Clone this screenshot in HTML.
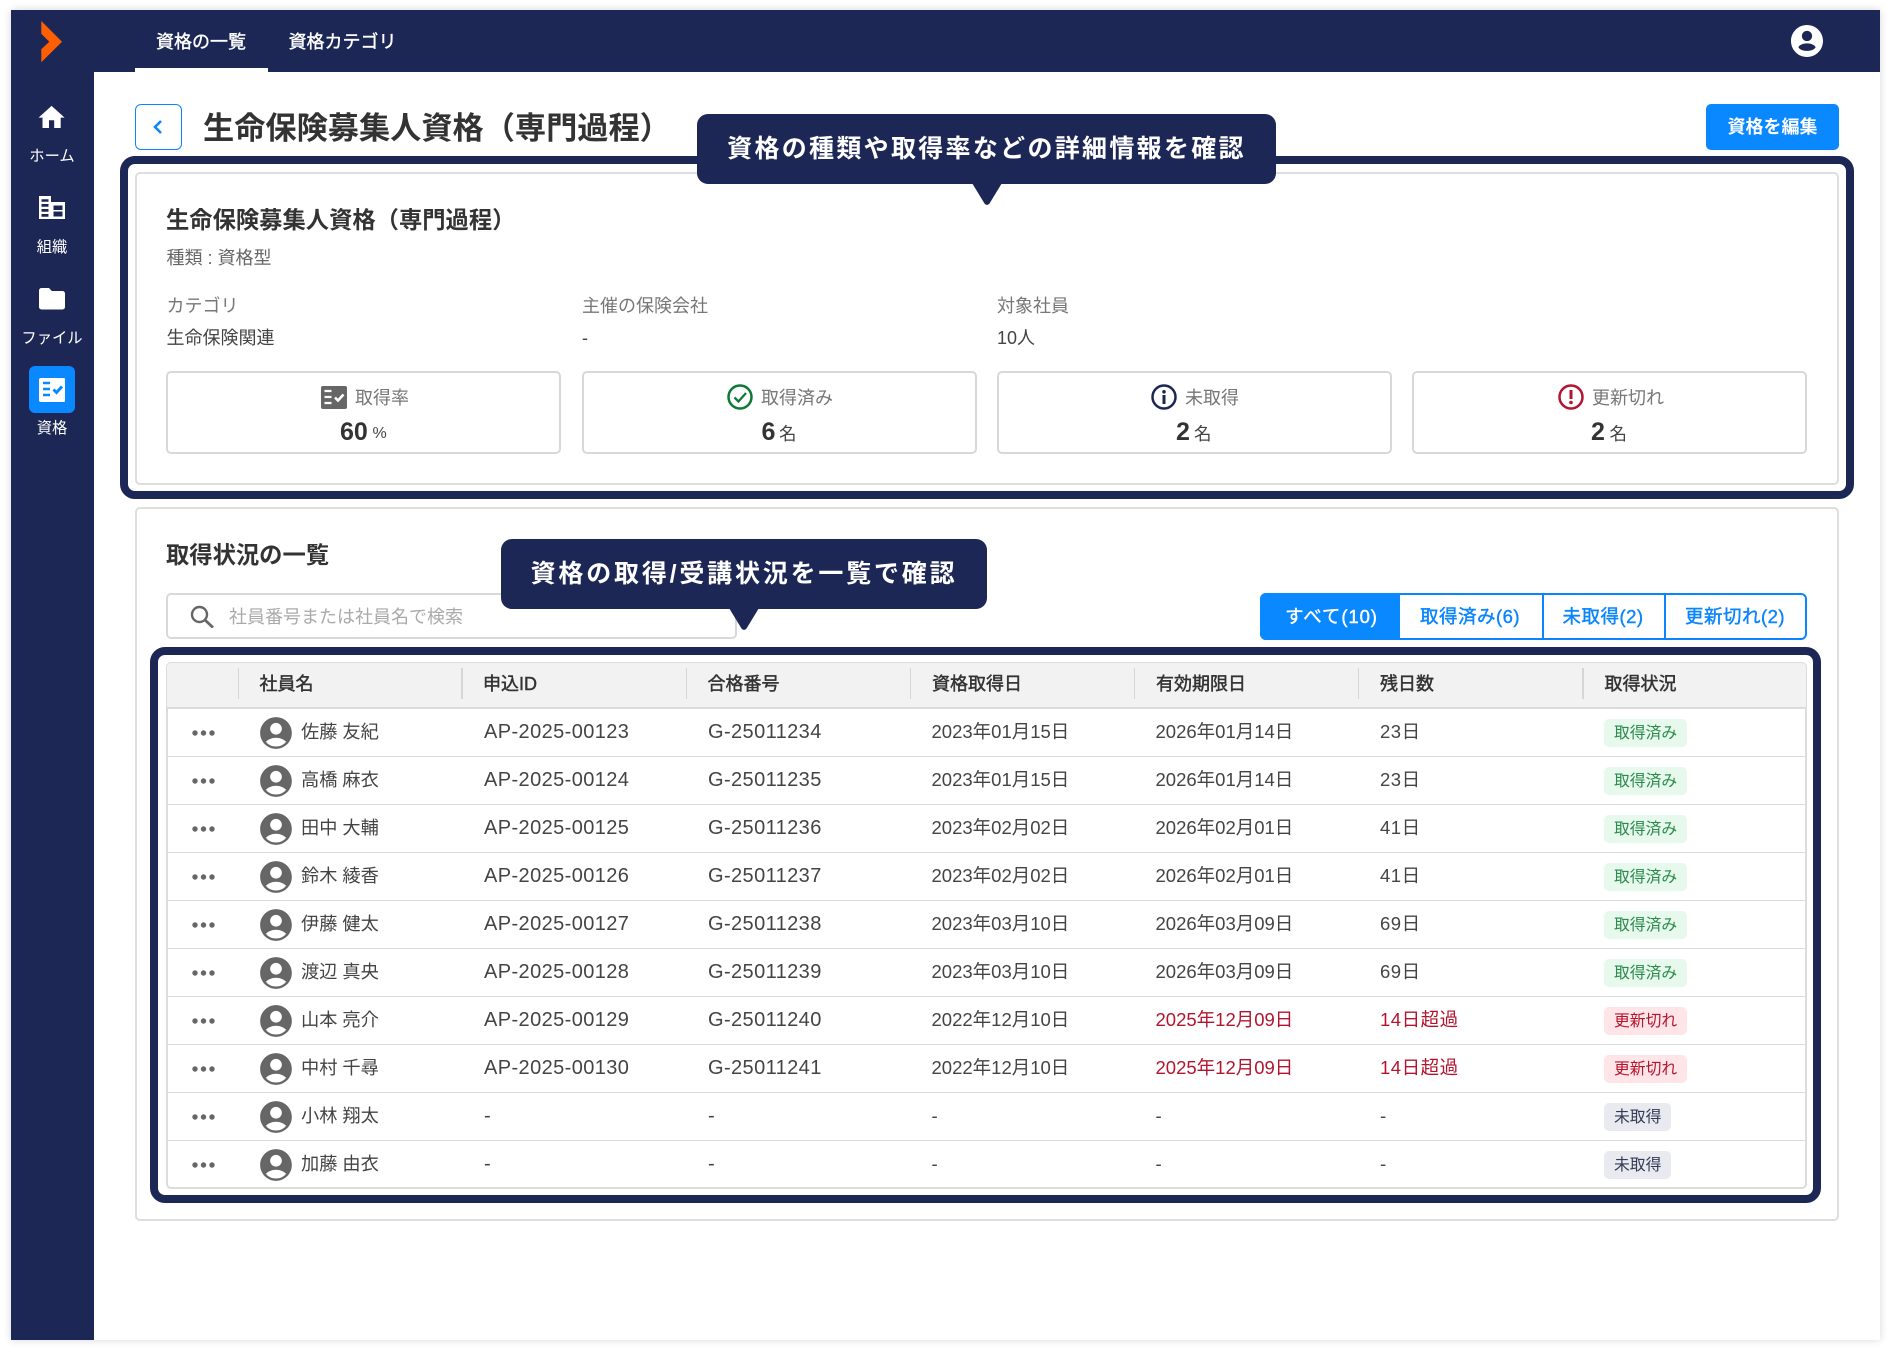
<!DOCTYPE html>
<html lang="ja"><head><meta charset="utf-8"><title>資格</title>
<style>
*{box-sizing:border-box;margin:0;padding:0}
html,body{width:1890px;height:1350px;background:#fff;overflow:hidden}
body{position:relative;font-family:"Liberation Sans","Noto Sans CJK JP",sans-serif;color:#333;font-size:18px}
.a{position:absolute;white-space:nowrap}
.win{left:11px;top:10px;width:1869px;height:1330px;background:#fff;box-shadow:0 0 8px rgba(0,0,0,.16)}
.side{left:11px;top:10px;width:82.5px;height:1330px;background:#1c2755}
.head{left:11px;top:10px;width:1869px;height:62px;background:#1c2755}
.tab{color:#fff;font-size:18px;-webkit-text-stroke:.4px #fff;line-height:26px;top:29px}
.nl{color:#fff;font-size:15.3px;line-height:20px;left:10px;width:84px;text-align:center}
.card{border:2px solid #dedede;border-radius:5px;background:#fff}
.frame{border:8px solid #1c2755;border-radius:15px}
.call{background:#1c2755;border-radius:11px;color:#fff;font-size:25px;font-weight:700;letter-spacing:2.3px;text-align:center}
.g{color:#777}
.box{border:2px solid #d8d8d8;border-radius:5px;top:371px;height:83px;width:394px;background:#fff}
.lb{color:#777;line-height:26px;top:385px}
.num{font-weight:700;font-size:25px;line-height:30px;top:417px;color:#333}
.un{font-size:17.5px;line-height:24px;top:422px;color:#444}
.r{position:absolute;left:166px;width:1640.5px;height:48px;border-bottom:1.5px solid #dcdcdc;color:#444}
.r span,.r svg,.r b{position:absolute;white-space:nowrap}
.r span{top:0;line-height:46px;font-size:18.5px;font-weight:400}
.r span.n{left:135px;font-size:18.2px}
.r span.c3{left:318px;font-size:20px;letter-spacing:.4px}
.r span.c4{left:542px;font-size:20px;letter-spacing:.4px}
.c5{left:765.5px}.c6{left:989.5px}
.r span.c7{left:1214px;letter-spacing:.5px}
.red{color:#b3152f}
.r b{left:1438px;top:9.5px;height:28.5px;line-height:29px;border-radius:5px;padding:0 10px;font-size:15.8px;font-weight:400}
.ok{background:#e6f9ec;color:#2b8a4c}
.ex{background:#ffe4e8;color:#b3152f}
.no{background:#e9eaf0;color:#333a55}
.av{left:90.5px;top:4.5px}
.dt{left:25.5px;top:21px}
.th{font-size:18px;-webkit-text-stroke:.45px #333;line-height:44px;top:662px;color:#333}
.sep{width:1.5px;height:31px;top:668px;background:#d6d6d6}
.seg{top:593px;height:46.5px;line-height:48px;padding-right:2px;text-align:center;-webkit-text-stroke:.4px #0a84ff;font-size:18.5px;letter-spacing:.5px;color:#0a84ff}
</style></head><body>
<svg width="0" height="0" style="position:absolute"><defs>
<symbol id="av" viewBox="0 0 24 24"><path fill="#666" d="M12 2C6.48 2 2 6.48 2 12s4.48 10 10 10 10-4.48 10-10S17.52 2 12 2zm0 3.6c2 0 3.7 1.7 3.7 3.7S14 13 12 13s-3.7-1.7-3.7-3.7S10 5.600 12 5.600zm0 14.900c-2.500 0-4.800-1-6.400-3 1.600-1.500 3.900-2.500 6.400-2.500s4.800 1 6.400 2.500c-1.600 2-3.900 3-6.400 3z"/></symbol>
<symbol id="dt" viewBox="0 0 24 6"><circle cx="3" cy="3" r="2.700" fill="#666"/><circle cx="11.500" cy="3" r="2.700" fill="#666"/><circle cx="20" cy="3" r="2.700" fill="#666"/></symbol>
</defs></svg>

<div class="a win"></div>
<div class="a head"></div>
<div class="a side"></div>
<svg class="a" style="left:0;top:0" width="93" height="72"><polygon fill="#ff5f00" points="41.300,21 62,41.700 41.300,62.300 41.300,49.300 49.300,41.700 41.300,33.700"/></svg>
<div class="a tab" style="left:156px">資格の一覧</div>
<div class="a tab" style="left:288.500px">資格カテゴリ</div>
<div class="a" style="left:135px;top:68px;width:133px;height:4px;background:#fff"></div>
<svg class="a" style="left:1791px;top:25px" width="32" height="32" viewBox="2 2 20 20"><path fill="#fff" d="M12 2C6.48 2 2 6.48 2 12s4.48 10 10 10 10-4.480 10-10S17.520 2 12 2zm0 3.700c1.800 0 3.200 1.400 3.200 3.200S13.800 12.100 12 12.100 8.800 10.700 8.800 8.900 10.200 5.700 12 5.700zm0 12.500c-2.600 0-4.700-.9-5.400-2.300.7-1.400 2.800-2.400 5.400-2.400s4.700 1 5.400 2.400c-.7 1.400-2.800 2.300-5.400 2.300z" fill-rule="evenodd"/></svg>

<!-- sidebar -->
<svg class="a" style="left:36.400px;top:102px" width="31.200" height="31.200" viewBox="0 0 24 24"><path fill="#fff" d="M10 20v-6h4v6h5v-8h3L12 3 2 12h3v8z"/></svg>
<div class="a nl" style="top:146.500px">ホーム</div>
<svg class="a" style="left:39px;top:196px" width="26" height="23" viewBox="0 0 26 23"><path fill="#fff" fill-rule="evenodd" d="M0 0h12v6H26v17H0zM2.500 3.300v2.500H9.500V3.300zm0 4.700v2.800H9.500V8zm0 5v2.800H9.500V13zm0 5v2.800H9.500V18zM14.500 9.500v4.500H23.500V9.500zm0 6v5H23.500v-5z"/></svg>
<div class="a nl" style="top:237.500px">組織</div>
<svg class="a" style="left:39px;top:288px" width="26" height="21.500" viewBox="0 0 26 21.500"><path fill="#fff" d="M2.500 0H10l2.800 3H23.500A2.500 2.500 0 0 1 26 5.500v13.500a2.500 2.500 0 0 1-2.500 2.500h-21A2.500 2.500 0 0 1 0 19V2.500A2.500 2.500 0 0 1 2.500 0z"/></svg>
<div class="a nl" style="top:328.500px">ファイル</div>
<div class="a" style="left:29px;top:366px;width:46px;height:47px;background:#0a88ff;border-radius:6px"></div>
<svg class="a" style="left:38.500px;top:377.500px" width="26.500" height="24" viewBox="0 0 26.500 24"><rect width="26.500" height="24" rx="2" fill="#fff"/><path fill="none" stroke="#0a88ff" stroke-width="2.600" d="M4 5h7M4 11h7M4 17h7"/><path fill="none" stroke="#0a88ff" stroke-width="3" d="M14.500 11.500l3 3L23 8.500"/></svg>
<div class="a nl" style="top:419px">資格</div>

<!-- title -->
<div class="a" style="left:135px;top:104px;width:46.500px;height:46px;border:1.500px solid #0a84ff;border-radius:6px"></div>
<svg class="a" style="left:152px;top:118px" width="12" height="18" viewBox="0 0 12 18"><path fill="none" stroke="#0a84ff" stroke-width="2.500" d="M9 3L3 9l6 6"/></svg>
<div class="a" style="left:203px;top:106.500px;font-size:31.200px;line-height:44px;font-weight:700;color:#333">生命保険募集人資格（専門過程）</div>
<div class="a" style="left:1706px;top:104px;width:133px;height:46px;background:#0a88ff;border-radius:5px;color:#fff;font-weight:700;font-size:18px;line-height:47px;text-align:center">資格を編集</div>

<!-- card 1 -->
<div class="a card" style="left:135px;top:172px;width:1703.500px;height:313px"></div>
<div class="a" style="left:166px;top:204px;font-size:23.300px;line-height:32px;font-weight:700;color:#333">生命保険募集人資格（専門過程）</div>
<div class="a" style="left:166.500px;top:244.500px;line-height:26px;color:#666;font-size:18px">種類 : 資格型</div>
<div class="a g" style="left:166.500px;top:293px;line-height:26px">カテゴリ</div>
<div class="a" style="left:166.500px;top:325px;line-height:26px;color:#444">生命保険関連</div>
<div class="a g" style="left:582px;top:293px;line-height:26px">主催の保険会社</div>
<div class="a" style="left:582px;top:325px;line-height:26px;color:#444">-</div>
<div class="a g" style="left:997px;top:293px;line-height:26px">対象社員</div>
<div class="a" style="left:997px;top:325px;line-height:26px;color:#444">10人</div>

<div class="a box" style="left:166px;width:395px"></div>
<div class="a box" style="left:581.500px;width:395px"></div>
<div class="a box" style="left:997px;width:395px"></div>
<div class="a box" style="left:1412px;width:394.500px"></div>

<svg class="a" style="left:321px;top:386px" width="26" height="23" viewBox="0 0 26 23"><rect width="26" height="23" rx="2" fill="#666"/><path fill="none" stroke="#fff" stroke-width="2.300" d="M3.500 5h7M3.500 11h7M3.500 17h7"/><path fill="none" stroke="#fff" stroke-width="2.600" d="M14 11.500l3 3 5.500-6"/></svg>
<div class="a lb" style="left:355px">取得率</div>
<div class="a num" style="left:340px">60</div><div class="a un" style="left:372.500px;font-size:16px">%</div>

<svg class="a" style="left:727px;top:384px" width="26" height="26" viewBox="0 0 26 26"><circle cx="13" cy="13" r="11.500" fill="none" stroke="#0d7a35" stroke-width="2.500"/><path fill="none" stroke="#0d7a35" stroke-width="2.300" d="M7.500 13.500l4 4 7.500-8.500"/></svg>
<div class="a lb" style="left:761px">取得済み</div>
<div class="a num" style="left:761.500px">6</div><div class="a un" style="left:779px">名</div>

<svg class="a" style="left:1151px;top:384px" width="26" height="26" viewBox="0 0 26 26"><circle cx="13" cy="13" r="11.500" fill="none" stroke="#1c2755" stroke-width="2.500"/><circle cx="13" cy="7.800" r="1.800" fill="#1c2755"/><rect x="11.500" y="11" width="3" height="9" fill="#1c2755"/></svg>
<div class="a lb" style="left:1185px">未取得</div>
<div class="a num" style="left:1176px">2</div><div class="a un" style="left:1194px">名</div>

<svg class="a" style="left:1557.500px;top:384px" width="26" height="26" viewBox="0 0 26 26"><circle cx="13" cy="13" r="11.500" fill="none" stroke="#b3152f" stroke-width="2.500"/><rect x="11.500" y="6" width="3" height="9" fill="#b3152f"/><circle cx="13" cy="18.500" r="1.800" fill="#b3152f"/></svg>
<div class="a lb" style="left:1592px">更新切れ</div>
<div class="a num" style="left:1591px">2</div><div class="a un" style="left:1609.500px">名</div>

<!-- card 2 -->
<div class="a card" style="left:135px;top:507px;width:1703.500px;height:714px"></div>
<div class="a" style="left:166px;top:539px;font-size:23.300px;line-height:32px;font-weight:700;color:#333">取得状況の一覧</div>
<div class="a" style="left:166px;top:593px;width:571px;height:46px;border:2px solid #d8d8d8;border-radius:5px;background:#fff"></div>
<svg class="a" style="left:190px;top:605px" width="25" height="23" viewBox="0 0 25 23"><circle cx="9.500" cy="9.500" r="7.500" fill="none" stroke="#666" stroke-width="2.400"/><path fill="none" stroke="#666" stroke-width="2.800" d="M15 15l8 7.500"/></svg>
<div class="a" style="left:229px;top:604px;line-height:26px;color:#aaa">社員番号または社員名で検索</div>

<div class="a" style="left:1260px;top:593px;width:546.500px;height:46.500px;border:2px solid #0a84ff;border-radius:6px;background:#fff"></div>
<div class="a seg" style="left:1260px;width:140px;background:#0a88ff;color:#fff;-webkit-text-stroke:.4px #fff;border-radius:6px 0 0 6px;letter-spacing:.9px;padding-right:0;padding-left:3px">すべて(10)</div>
<div class="a seg" style="left:1400px;width:142px;">取得済み(6)</div>
<div class="a seg" style="left:1541.500px;width:123px;border-left:2px solid #0a84ff">未取得(2)</div>
<div class="a seg" style="left:1664px;width:142px;border-left:2px solid #0a84ff">更新切れ(2)</div>

<!-- table -->
<div class="a" style="left:166px;top:662px;width:1640.500px;height:527px;border:2px solid #dcdcdc;border-radius:5px;background:#fff"></div>
<div class="a" style="left:167px;top:663px;width:1638.500px;height:44px;background:#f2f2f2;border-radius:4px 4px 0 0"></div>
<div class="a" style="left:166px;top:706.500px;width:1640.500px;height:2px;background:#dcdcdc"></div>
<div class="a sep" style="left:237.500px"></div><div class="a sep" style="left:461px"></div><div class="a sep" style="left:685.500px"></div><div class="a sep" style="left:909.500px"></div><div class="a sep" style="left:1133.500px"></div><div class="a sep" style="left:1357.500px"></div><div class="a sep" style="left:1582px"></div>
<div class="a th" style="left:259.500px">社員名</div>
<div class="a th" style="left:483px">申込ID</div>
<div class="a th" style="left:707.500px">合格番号</div>
<div class="a th" style="left:932px">資格取得日</div>
<div class="a th" style="left:1156px">有効期限日</div>
<div class="a th" style="left:1380px">残日数</div>
<div class="a th" style="left:1604.500px">取得状況</div>

<div class="r" style="top:709px"><svg class="dt" width="24" height="6"><use href="#dt"/></svg><svg class="av" width="38" height="38"><use href="#av"/></svg><span class="n">佐藤 友紀</span><span class="c3">AP-2025-00123</span><span class="c4">G-25011234</span><span class="c5">2023年01月15日</span><span class="c6">2026年01月14日</span><span class="c7">23日</span><b class="ok">取得済み</b></div>
<div class="r" style="top:757px"><svg class="dt" width="24" height="6"><use href="#dt"/></svg><svg class="av" width="38" height="38"><use href="#av"/></svg><span class="n">高橋 麻衣</span><span class="c3">AP-2025-00124</span><span class="c4">G-25011235</span><span class="c5">2023年01月15日</span><span class="c6">2026年01月14日</span><span class="c7">23日</span><b class="ok">取得済み</b></div>
<div class="r" style="top:805px"><svg class="dt" width="24" height="6"><use href="#dt"/></svg><svg class="av" width="38" height="38"><use href="#av"/></svg><span class="n">田中 大輔</span><span class="c3">AP-2025-00125</span><span class="c4">G-25011236</span><span class="c5">2023年02月02日</span><span class="c6">2026年02月01日</span><span class="c7">41日</span><b class="ok">取得済み</b></div>
<div class="r" style="top:853px"><svg class="dt" width="24" height="6"><use href="#dt"/></svg><svg class="av" width="38" height="38"><use href="#av"/></svg><span class="n">鈴木 綾香</span><span class="c3">AP-2025-00126</span><span class="c4">G-25011237</span><span class="c5">2023年02月02日</span><span class="c6">2026年02月01日</span><span class="c7">41日</span><b class="ok">取得済み</b></div>
<div class="r" style="top:901px"><svg class="dt" width="24" height="6"><use href="#dt"/></svg><svg class="av" width="38" height="38"><use href="#av"/></svg><span class="n">伊藤 健太</span><span class="c3">AP-2025-00127</span><span class="c4">G-25011238</span><span class="c5">2023年03月10日</span><span class="c6">2026年03月09日</span><span class="c7">69日</span><b class="ok">取得済み</b></div>
<div class="r" style="top:949px"><svg class="dt" width="24" height="6"><use href="#dt"/></svg><svg class="av" width="38" height="38"><use href="#av"/></svg><span class="n">渡辺 真央</span><span class="c3">AP-2025-00128</span><span class="c4">G-25011239</span><span class="c5">2023年03月10日</span><span class="c6">2026年03月09日</span><span class="c7">69日</span><b class="ok">取得済み</b></div>
<div class="r" style="top:997px"><svg class="dt" width="24" height="6"><use href="#dt"/></svg><svg class="av" width="38" height="38"><use href="#av"/></svg><span class="n">山本 亮介</span><span class="c3">AP-2025-00129</span><span class="c4">G-25011240</span><span class="c5">2022年12月10日</span><span class="c6 red">2025年12月09日</span><span class="c7 red">14日超過</span><b class="ex">更新切れ</b></div>
<div class="r" style="top:1045px"><svg class="dt" width="24" height="6"><use href="#dt"/></svg><svg class="av" width="38" height="38"><use href="#av"/></svg><span class="n">中村 千尋</span><span class="c3">AP-2025-00130</span><span class="c4">G-25011241</span><span class="c5">2022年12月10日</span><span class="c6 red">2025年12月09日</span><span class="c7 red">14日超過</span><b class="ex">更新切れ</b></div>
<div class="r" style="top:1093px"><svg class="dt" width="24" height="6"><use href="#dt"/></svg><svg class="av" width="38" height="38"><use href="#av"/></svg><span class="n">小林 翔太</span><span class="c3">-</span><span class="c4">-</span><span class="c5">-</span><span class="c6">-</span><span class="c7">-</span><b class="no">未取得</b></div>
<div class="r" style="top:1141px;border-bottom:0"><svg class="dt" width="24" height="6"><use href="#dt"/></svg><svg class="av" width="38" height="38"><use href="#av"/></svg><span class="n">加藤 由衣</span><span class="c3">-</span><span class="c4">-</span><span class="c5">-</span><span class="c6">-</span><span class="c7">-</span><b class="no">未取得</b></div>

<!-- highlight frames -->
<div class="a frame" style="left:120px;top:156px;width:1733.500px;height:343px"></div>
<div class="a frame" style="left:150px;top:647px;width:1670.500px;height:556px"></div>

<!-- callouts -->
<div class="a call" style="left:697px;top:114px;width:579px;height:70px;line-height:71px">資格の種類や取得率などの詳細情報を確認</div>
<svg class="a" style="left:972px;top:183px" width="30" height="23" viewBox="0 0 30 23"><path fill="#1c2755" d="M0 0h30L17.500 20.500a3 3 0 0 1-5 0z"/></svg>
<div class="a call" style="left:501px;top:539px;width:486px;height:70px;line-height:71px;letter-spacing:2.800px">資格の取得/受講状況を一覧で確認</div>
<svg class="a" style="left:729px;top:608px" width="30" height="23" viewBox="0 0 30 23"><path fill="#1c2755" d="M0 0h30L17.500 20.500a3 3 0 0 1-5 0z"/></svg>
</body></html>
